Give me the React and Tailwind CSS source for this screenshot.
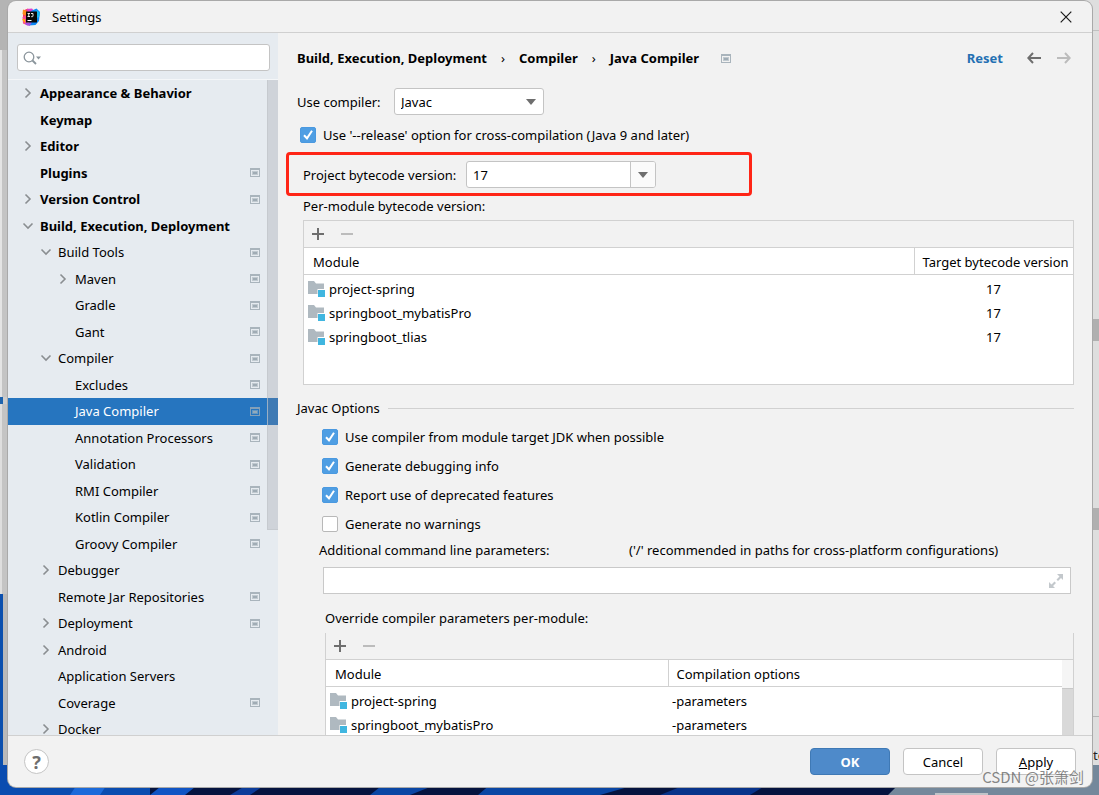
import React from "react";

const TREE = [
  { label: "Appearance & Behavior", level: 0, arrow: "right" },
  { label: "Keymap", level: 0 },
  { label: "Editor", level: 0, arrow: "right" },
  { label: "Plugins", level: 0, badge: true },
  { label: "Version Control", level: 0, arrow: "right", badge: true },
  { label: "Build, Execution, Deployment", level: 0, arrow: "down" },
  { label: "Build Tools", level: 1, arrow: "down", badge: true },
  { label: "Maven", level: 2, arrow: "right", badge: true },
  { label: "Gradle", level: 2, badge: true },
  { label: "Gant", level: 2, badge: true },
  { label: "Compiler", level: 1, arrow: "down", badge: true },
  { label: "Excludes", level: 2, badge: true },
  { label: "Java Compiler", level: 2, badge: true, selected: true },
  { label: "Annotation Processors", level: 2, badge: true },
  { label: "Validation", level: 2, badge: true },
  { label: "RMI Compiler", level: 2, badge: true },
  { label: "Kotlin Compiler", level: 2, badge: true },
  { label: "Groovy Compiler", level: 2, badge: true },
  { label: "Debugger", level: 1, arrow: "right" },
  { label: "Remote Jar Repositories", level: 1, badge: true },
  { label: "Deployment", level: 1, arrow: "right", badge: true },
  { label: "Android", level: 1, arrow: "right" },
  { label: "Application Servers", level: 1 },
  { label: "Coverage", level: 1, badge: true },
  { label: "Docker", level: 1, arrow: "right" },
];

const INDENT = ["pl-[14px]", "pl-8", "pl-[49px]"];

function Logo() {
  return (
    <svg width="18" height="18" viewBox="0 0 18 18" aria-hidden="true">
      <path d="M1 2.5 6 .5 8 3 5 12 1 9.500Z" fill="#fb3b5c" />
      <path d="M1 1.500 5 3 3.500 8 .5 6Z" fill="#ff8a1d" />
      <path d="M.5 9 4 7.500 6 17.500 1 15.500Z" fill="#fc4c8a" />
      <path d="M0 11.500 3 11 3 15Z" fill="#ffb000" />
      <path d="M5 1 10 .5 13 4 6 6Z" fill="#d93fd0" />
      <path d="M9 3 14.500 .5 18 4 17 13 13.500 17 7 17.500Z" fill="#0b87f5" />
      <path d="M14 2 18 4.500 17 9 15 10Z" fill="#19b8f0" />
      <path d="M3 15 10 14 7.500 18 4 17Z" fill="#a44fe0" />
      <rect x="4" y="3.500" width="11" height="11" fill="#080808" />
      <path d="M5.500 5.500h2.500M6.750 5.500v3M5.500 8.500h2.500M9 5.500h2v2.500q0 .7-.8.700h-1" fill="none" stroke="#fff" strokeWidth=".9" />
      <rect x="5.500" y="12" width="4" height="1" fill="#fff" />
    </svg>
  );
}

function Chevron({ dir }) {
  return (
    <svg width="12" height="12" viewBox="0 0 12 12" fill="none" stroke="#8a8e91" strokeWidth="1.600" aria-hidden="true">
      {dir === "right" ? <path d="M3.500 1.500 8 6 3.500 10.500" /> : <path d="M1.500 3.500 6 8 10.500 3.500" />}
    </svg>
  );
}

function ProjectBadge() {
  return (
    <svg className="shrink-0" width="10" height="9" viewBox="0 0 10 9" aria-hidden="true">
      <path d="M0 0h10v9H0ZM1 2v6h8V2Z" fill="#a9b4bc" fillRule="evenodd" />
      <rect x="2" y="3" width="6" height="4" fill="#c0c9cf" />
      <rect x="3" y="4" width="4" height="2" fill="#a0acb5" />
    </svg>
  );
}

function SelectedBadge() {
  return (
    <svg className="shrink-0" width="10" height="9" viewBox="0 0 10 9" aria-hidden="true">
      <path d="M0 0h10v9H0ZM1 2v6h8V2Z" fill="#83a0b8" fillRule="evenodd" />
      <rect x="2" y="3" width="6" height="4" fill="#6497c2" />
      <rect x="3" y="4" width="4" height="2" fill="#93aabb" />
    </svg>
  );
}

function ModuleIcon() {
  return (
    <svg className="shrink-0" width="17" height="16" viewBox="0 0 17 16" aria-hidden="true">
      <path d="M0 0h6l2 2.500h8V8H9.500v5H0Z" fill="#afb9c0" />
      <rect x="10" y="9" width="7" height="7" fill="#40b6e0" />
    </svg>
  );
}

function Triangle() {
  return (
    <svg width="10" height="6" viewBox="0 0 10 6" aria-hidden="true">
      <path d="M0 0h10L5 6Z" fill="#6e6e6e" />
    </svg>
  );
}

function Check({ id, label, checked }) {
  return (
    <div className="flex items-center gap-[7px]">
      <span className="relative flex size-4 shrink-0">
        <input
          id={id}
          type="checkbox"
          defaultChecked={checked}
          className="peer size-4 appearance-none rounded-[2px] border border-[#b8b8b8] bg-white checked:border-[#4a99e0] checked:bg-[#4f9ee3]"
        />
        <svg className="pointer-events-none absolute inset-0 hidden peer-checked:block" width="16" height="16" viewBox="0 0 16 16" fill="none" stroke="#fff" strokeWidth="2" aria-hidden="true">
          <path d="M4 8.200 7 11.300 12 3.800" />
        </svg>
      </span>
      <label htmlFor={id}>{label}</label>
    </div>
  );
}

function Toolbar() {
  return (
    <div className="flex h-[27px] items-center gap-[17px] border-b border-[#d1d1d1] px-2">
      <button type="button" aria-label="Add" className="flex">
        <svg width="12" height="12" viewBox="0 0 12 12" stroke="#6e6e6e" strokeWidth="2" aria-hidden="true">
          <path d="M6 0v12M0 6h12" />
        </svg>
      </button>
      <button type="button" aria-label="Remove" disabled className="flex">
        <svg width="12" height="12" viewBox="0 0 12 12" stroke="#bcbcbc" strokeWidth="2" aria-hidden="true">
          <path d="M0 6h12" />
        </svg>
      </button>
    </div>
  );
}

function ModuleCell({ name }) {
  return (
    <td className="p-0">
      <div className="flex h-6 items-center gap-1 pl-1">
        <ModuleIcon />
        {name}
      </div>
    </td>
  );
}

function Desktop() {
  return (
    <div className="absolute inset-0 flex flex-col overflow-hidden bg-[#06184a]" aria-hidden="true">
      <div className="flex min-h-0 flex-1 justify-between">
        <div className="flex w-5 flex-col bg-[#cdcdcd]">
          <div className="h-[50px] bg-[#b4b4b4]" />
          <div className="h-[347px] border-l-2 border-[#e4e4e4] bg-[#c4c4c4]" />
          <div className="h-[7px] w-[3px] bg-[#1f64ad]" />
          <div className="h-[190px] border-l-2 border-[#dedede] bg-[#c4c4c4]" />
          <div className="flex-1 border-l-[3px] border-[#0b4fae] bg-[#b9b9b9]" />
        </div>
        <div className="flex w-5 flex-col bg-[#dedede]">
          <div className="h-[31px] border-b border-[#c0c0c0]" />
          <div className="h-[288px]" />
          <div className="h-[22px] bg-[#b0b0b0]" />
          <div className="h-[167px]" />
          <div className="h-[22px] bg-[#b0b0b0]" />
          <div className="h-[187px] border-b border-[#b5b5b5]" />
          <div className="flex-1" />
        </div>
      </div>
      <svg className="block h-[30px] w-full shrink-0" viewBox="0 0 1099 30" preserveAspectRatio="none">
        <rect width="1099" height="30" fill="#05133f" />
        <path d="M0 0h150v30H0Z" fill="#0a4cb0" />
        <path d="M70 30 78 18h30L100 30Z" fill="#1c6ada" />
        <path d="M150 30 165 18h35L185 30Z" fill="#1054c4" />
        <path d="M230 30 250 18h18L250 30Z" fill="#0c3c9a" />
        <path d="M370 30 385 18h55L410 30ZM478 30 492 18h150L600 30Z" fill="#0a46a4" />
        <path d="M660 30 690 18h80L750 30Z" fill="#08338a" />
        <path d="M888 30 900 18V0h199v30Z" fill="#74889b" />
        <rect x="935" y="28" width="53" height="2" fill="#c0c4c8" />
      </svg>
    </div>
  );
}

export default function App() {
  return (
    <div className="relative h-screen overflow-hidden pt-px pr-[7px] pb-2 pl-2 font-['Noto_Sans','Noto_Sans_CJK_SC',sans-serif] text-[13px] leading-5 text-black">
      <Desktop />
      <span className="absolute right-0 bottom-[30px] w-[6px] overflow-hidden text-[#222]">te</span>

      <div className="relative flex h-full flex-col overflow-hidden rounded-lg bg-[#f2f2f2] shadow-[0_0_0_1px_#a9a9a9]">
        <header className="flex h-8 shrink-0 items-center gap-3 border-b border-[#d0d0d0] pr-5 pl-[14px]">
          <Logo />
          <h1 className="flex-1">Settings</h1>
          <button type="button" aria-label="Close" className="flex">
            <svg width="12" height="12" viewBox="0 0 12 12" stroke="#1a1a1a" strokeWidth="1.200" aria-hidden="true">
              <path d="M.7.700 11.300 11.300M11.300.7.700 11.300" />
            </svg>
          </button>
        </header>

        <div className="flex min-h-0 flex-1">
          <aside className="flex w-[270px] shrink-0 flex-col bg-[#e6ebf0]">
            <div className="border-b border-[#f4f6f8] pt-[11px] pr-2 pb-2 pl-[9px]">
              <div className="flex h-[27px] items-center rounded-[3px] border border-[#c4c4c4] bg-white pl-[5px]">
                <svg width="18" height="14" viewBox="0 0 18 14" aria-hidden="true">
                  <circle cx="6" cy="6" r="4.800" fill="none" stroke="#8b959c" strokeWidth="1.300" />
                  <path d="M9.500 9.500 13 13" stroke="#8b959c" strokeWidth="1.800" />
                  <path d="M13 5.500h5L15.500 8.500Z" fill="#8b959c" />
                </svg>
                <input type="search" aria-label="Search settings" className="min-w-0 flex-1 bg-transparent px-1 outline-none" />
              </div>
            </div>
            <div className="relative min-h-0 flex-1 overflow-hidden">
              <ul>
                {TREE.map((n) => (
                  <li key={n.label} className={n.selected ? "odd:h-[27px] even:h-[26px] bg-[#2675bf] text-white" : "odd:h-[27px] even:h-[26px]"}>
                    <button type="button" className={"flex h-full w-full items-center gap-1 pr-[18px] pb-px text-left " + INDENT[n.level]}>
                      <span className="flex w-[14px] shrink-0 items-center justify-center pr-0.5">
                        {n.arrow && <Chevron dir={n.arrow} />}
                      </span>
                      <span className={n.level === 0 ? "flex-1 font-bold" : "flex-1"}>{n.label}</span>
                      {n.badge && (n.selected ? <SelectedBadge /> : <ProjectBadge />)}
                    </button>
                  </li>
                ))}
              </ul>
              <div className="absolute top-0 right-0 h-[450px] w-[11px] border-b border-l border-[#c2c6cb]/70 bg-[#8a8a92]/25" />
            </div>
          </aside>

          <main className="min-w-0 flex-1 overflow-hidden pr-[18px] pl-[19px]">
            <div className="flex h-[50px] items-center font-bold">
              <nav aria-label="Breadcrumb" className="flex flex-1 items-center gap-[14px]">
                <span>Build, Execution, Deployment</span>
                <span className="font-normal">›</span>
                <span>Compiler</span>
                <span className="font-normal">›</span>
                <span className="pr-2">Java Compiler</span>
                <ProjectBadge />
              </nav>
              <a href="#reset" className="pr-6 text-[#2470b3]">Reset</a>
              <div className="flex gap-4 pr-[3px]">
                <button type="button" aria-label="Back" className="flex">
                  <svg width="14" height="12" viewBox="0 0 14 12" fill="none" stroke="#6e6e6e" strokeWidth="2" aria-hidden="true">
                    <path d="M14 6H1.500M6 1 1.300 6 6 11" />
                  </svg>
                </button>
                <button type="button" aria-label="Forward" disabled className="flex">
                  <svg width="14" height="12" viewBox="0 0 14 12" fill="none" stroke="#bcbcbc" strokeWidth="2" aria-hidden="true">
                    <path d="M0 6h12.500M8 1l4.700 5L8 11" />
                  </svg>
                </button>
              </div>
            </div>

            <div className="mt-[5px] flex items-center">
              <label htmlFor="compiler" className="w-[97px]">Use compiler:</label>
              <div className="relative">
                <select id="compiler" className="block h-[27px] w-[150px] appearance-none rounded-[3px] border border-[#c4c4c4] bg-white px-[6px] outline-none">
                  <option>Javac</option>
                </select>
                <span className="pointer-events-none absolute top-[11px] right-2">
                  <Triangle />
                </span>
              </div>
            </div>

            <div className="mt-[10px] pl-[3px]">
              <Check id="release" checked label="Use '--release' option for cross-compilation (Java 9 and later)" />
            </div>

            <div className="relative mt-4 flex items-center pl-1.5">
              <label htmlFor="bytecode" className="w-[163px]">Project bytecode version:</label>
              <div className="flex h-[27px] w-[190px] overflow-hidden rounded-[3px] border border-[#c4c4c4] bg-white">
                <input id="bytecode" defaultValue="17" className="min-w-0 flex-1 px-[6px] outline-none" />
                <button type="button" aria-label="Choose version" className="flex w-[25px] items-center justify-center border-l border-[#c4c4c4] bg-[#fafafa]">
                  <Triangle />
                </button>
              </div>
              <div className="pointer-events-none absolute -top-[9px] -left-[11px] h-[44px] w-[466px] rounded-[4px] border-[3px] border-[#ff2516]" />
            </div>

            <section className="mt-2 pl-1.5">
              <h2>Per-module bytecode version:</h2>
              <div className="mt-1 h-[165px] border border-[#d1d1d1] bg-white">
                <div className="bg-[#f2f2f2]">
                  <Toolbar />
                </div>
                <table className="w-full border-collapse">
                  <thead>
                    <tr className="h-[26px] border-b border-[#d1d1d1]">
                      <th className="p-0 pt-0.5 pl-[9px] text-left font-normal">Module</th>
                      <th className="w-[159px] border-l border-[#d1d1d1] p-0 pt-0.5 pl-2 text-left font-normal whitespace-nowrap">Target bytecode version</th>
                    </tr>
                  </thead>
                  <tbody>
                    <tr className="h-[3px]" />
                    {["project-spring", "springboot_mybatisPro", "springboot_tlias"].map((m) => (
                      <tr key={m}>
                        <ModuleCell name={m} />
                        <td className="p-0 text-center">17</td>
                      </tr>
                    ))}
                  </tbody>
                </table>
              </div>
            </section>

            <section className="mt-[13px]">
              <div className="flex items-center gap-2">
                <h2>Javac Options</h2>
                <div className="h-px flex-1 bg-[#d1d1d1]" />
              </div>
              <div className="mt-[9px] flex flex-col gap-[9px] pl-[25px]">
                <Check id="target" checked label="Use compiler from module target JDK when possible" />
                <Check id="debug" checked label="Generate debugging info" />
                <Check id="deprecated" checked label="Report use of deprecated features" />
                <Check id="nowarn" label="Generate no warnings" />
              </div>
              <div className="mt-1.5 flex pl-[22px]">
                <label htmlFor="params" className="w-[310px]">Additional command line parameters:</label>
                <span>('/' recommended in paths for cross-platform configurations)</span>
              </div>
              <div className="mt-[7px] mr-[3px] ml-[26px] flex h-[27px] items-center border border-[#c9c9c9] bg-white pr-[7px]">
                <input id="params" className="min-w-0 flex-1 bg-transparent px-1.5 outline-none" />
                <button type="button" aria-label="Expand" className="flex">
                  <svg width="14" height="14" viewBox="0 0 14 14" fill="#c3c8cc" aria-hidden="true">
                    <path d="M8 0h6v6l-2-2-3 3-1.500-1.500 3-3ZM0 8v6h6l-2-2 3-3-1.500-1.500-3 3Z" />
                  </svg>
                </button>
              </div>
              <h2 className="mt-[14px] pl-7">Override compiler parameters per-module:</h2>
              <div className="mt-[5px] ml-7 border-x border-[#d1d1d1]">
                <Toolbar />
                <div className="flex bg-white">
                  <table className="flex-1 border-collapse">
                    <thead>
                      <tr className="h-[26px] border-b border-[#d1d1d1]">
                        <th className="w-[342px] p-0 pt-0.5 pl-[9px] text-left font-normal">Module</th>
                        <th className="border-l border-[#d1d1d1] p-0 pt-0.5 pl-2 text-left font-normal">Compilation options</th>
                      </tr>
                    </thead>
                    <tbody>
                      <tr className="h-[3px]" />
                      {["project-spring", "springboot_mybatisPro", "springboot_tlias"].map((m) => (
                        <tr key={m}>
                          <ModuleCell name={m} />
                          <td className="p-0 pl-1">-parameters</td>
                        </tr>
                      ))}
                    </tbody>
                  </table>
                  <div className="flex w-[11px] flex-col bg-[#f5f5f5]">
                    <div className="mt-7 flex-1 border-t border-[#c8c8c8] bg-[#d9d9d9]" />
                  </div>
                </div>
              </div>
            </section>
          </main>
        </div>

        <footer className="flex h-[52px] shrink-0 items-center gap-[13px] border-t border-[#d0d0d0] pr-4 pl-4">
          <button type="button" aria-label="Help" className="flex size-[25px] items-center justify-center rounded-full border border-[#c4c4c4] bg-white text-lg font-bold text-[#6e6e6e]">
            ?
          </button>
          <div className="flex-1" />
          <button type="button" className="h-[27px] w-20 rounded-[4px] border border-[#3f79b5] bg-[#4e8aca] font-bold text-white">OK</button>
          <button type="button" className="h-[27px] w-20 rounded-[4px] border border-[#c4c4c4] bg-white">Cancel</button>
          <button type="button" className="h-[27px] w-20 rounded-[4px] border border-[#c4c4c4] bg-white">
            <span className="underline">A</span>pply
          </button>
        </footer>
      </div>

      <span className="absolute right-[15px] bottom-2 font-['Noto_Sans_CJK_SC',sans-serif] text-[15px] text-[#555]/70">CSDN @张箫剑</span>
    </div>
  );
}
